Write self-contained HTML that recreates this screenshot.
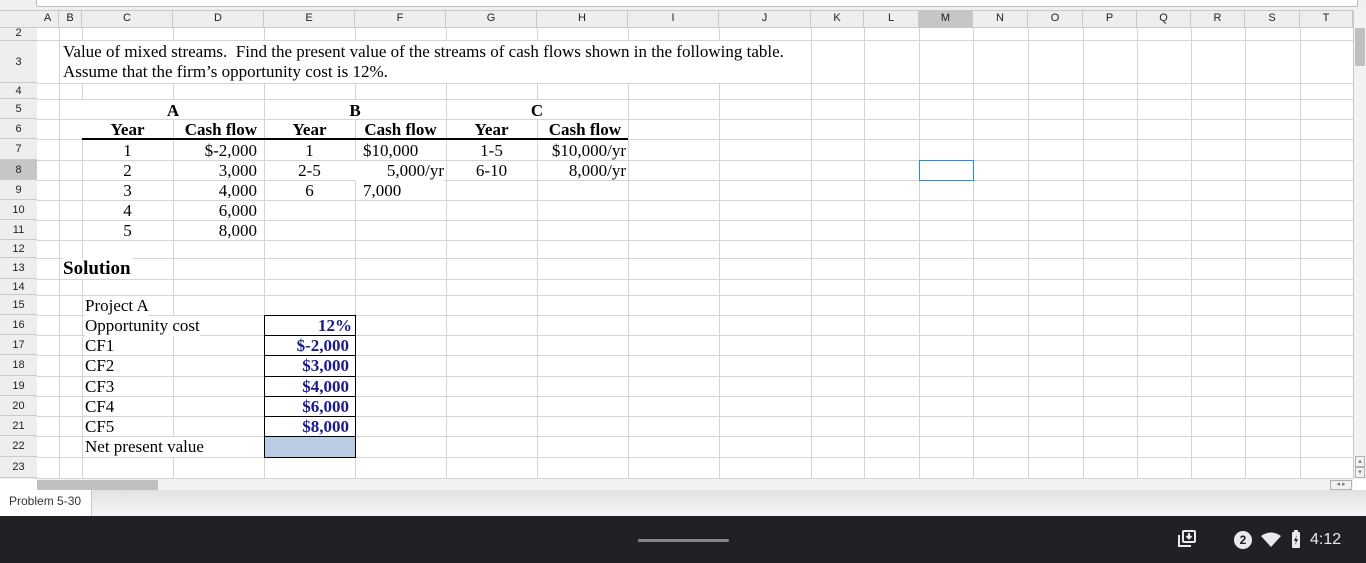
<!DOCTYPE html>
<html><head><meta charset="utf-8"><style>
*{margin:0;padding:0;box-sizing:border-box}
body{width:1366px;height:563px;overflow:hidden;background:#fff;position:relative;font-family:"Liberation Serif",serif}
.a{position:absolute}
.v{position:absolute;width:1px;background:#d4d4d4}
.h{position:absolute;height:1px;background:#d4d4d4}
.ch{position:absolute;top:10px;height:17px;font:11px "Liberation Sans",sans-serif;color:#222;text-align:center;line-height:17px;border-right:1px solid #c8c8c8}
.rh{position:absolute;left:0;width:37px;font:11px "Liberation Sans",sans-serif;color:#222;text-align:center;border-bottom:1px solid #c8c8c8;background:#eeeeee}
.t{position:absolute;font-size:17px;line-height:20px;color:#000;white-space:nowrap}
.b{font-weight:bold}
.c{text-align:center}
.r{text-align:right}
.bl{color:#1a1a8c;font-weight:bold;text-align:right;padding-right:6px}
</style></head><body>
<div class="a" style="left:0;top:0;width:1366px;height:10px;background:#f0f0f0"></div>
<div class="a" style="left:36px;top:-2px;width:1322px;height:9px;background:#fff;border:1px solid #bdbdbd;border-radius:2px"></div>
<div class="a" style="left:0;top:10px;width:1353px;height:18px;background:#eeeeee;border-bottom:1px solid #c8c8c8;border-top:1px solid #c8c8c8"></div>
<div class="ch" style="left:37px;width:22px">A</div>
<div class="ch" style="left:59px;width:23px">B</div>
<div class="ch" style="left:82px;width:91px">C</div>
<div class="ch" style="left:173px;width:91px">D</div>
<div class="ch" style="left:264px;width:91px">E</div>
<div class="ch" style="left:355px;width:91px">F</div>
<div class="ch" style="left:446px;width:91px">G</div>
<div class="ch" style="left:537px;width:91px">H</div>
<div class="ch" style="left:628px;width:91px">I</div>
<div class="ch" style="left:719px;width:92px">J</div>
<div class="ch" style="left:811px;width:53px">K</div>
<div class="ch" style="left:864px;width:55px">L</div>
<div class="ch" style="left:919px;width:54px;background:#c6c6c6">M</div>
<div class="ch" style="left:973px;width:55px">N</div>
<div class="ch" style="left:1028px;width:55px">O</div>
<div class="ch" style="left:1083px;width:54px">P</div>
<div class="ch" style="left:1137px;width:54px">Q</div>
<div class="ch" style="left:1191px;width:54px">R</div>
<div class="ch" style="left:1245px;width:55px">S</div>
<div class="ch" style="left:1300px;width:53px">T</div>
<div class="a" style="left:0;top:28px;width:37px;height:451px;background:#eeeeee;border-right:1px solid #c8c8c8"></div>
<div class="rh" style="top:28px;height:13px;line-height:10px">2</div>
<div class="rh" style="top:41px;height:42px;line-height:42px">3</div>
<div class="rh" style="top:83px;height:16px;line-height:16px">4</div>
<div class="rh" style="top:99px;height:20px;line-height:20px">5</div>
<div class="rh" style="top:119px;height:20px;line-height:20px">6</div>
<div class="rh" style="top:139px;height:21px;line-height:21px">7</div>
<div class="rh" style="top:160px;height:20px;line-height:20px;background:#c6c6c6">8</div>
<div class="rh" style="top:180px;height:20px;line-height:20px">9</div>
<div class="rh" style="top:200px;height:20px;line-height:20px">10</div>
<div class="rh" style="top:220px;height:20px;line-height:20px">11</div>
<div class="rh" style="top:240px;height:18px;line-height:18px">12</div>
<div class="rh" style="top:258px;height:21px;line-height:21px">13</div>
<div class="rh" style="top:279px;height:16px;line-height:16px">14</div>
<div class="rh" style="top:295px;height:20px;line-height:20px">15</div>
<div class="rh" style="top:315px;height:20px;line-height:20px">16</div>
<div class="rh" style="top:335px;height:20px;line-height:20px">17</div>
<div class="rh" style="top:355px;height:21px;line-height:21px">18</div>
<div class="rh" style="top:376px;height:20px;line-height:20px">19</div>
<div class="rh" style="top:396px;height:20px;line-height:20px">20</div>
<div class="rh" style="top:416px;height:20px;line-height:20px">21</div>
<div class="rh" style="top:436px;height:21px;line-height:21px">22</div>
<div class="rh" style="top:457px;height:21px;line-height:21px">23</div>
<div class="v" style="left:59px;top:28px;height:450px"></div>
<div class="v" style="left:82px;top:28px;height:13px"></div><div class="v" style="left:82px;top:83px;height:16px"></div><div class="v" style="left:82px;top:139px;height:339px"></div>
<div class="v" style="left:173px;top:28px;height:13px"></div><div class="v" style="left:173px;top:83px;height:16px"></div><div class="v" style="left:173px;top:119px;height:359px"></div>
<div class="v" style="left:264px;top:28px;height:13px"></div><div class="v" style="left:264px;top:83px;height:395px"></div>
<div class="v" style="left:355px;top:28px;height:13px"></div><div class="v" style="left:355px;top:83px;height:16px"></div><div class="v" style="left:355px;top:119px;height:359px"></div>
<div class="v" style="left:446px;top:28px;height:13px"></div><div class="v" style="left:446px;top:83px;height:395px"></div>
<div class="v" style="left:537px;top:28px;height:13px"></div><div class="v" style="left:537px;top:83px;height:16px"></div><div class="v" style="left:537px;top:119px;height:359px"></div>
<div class="v" style="left:628px;top:28px;height:13px"></div><div class="v" style="left:628px;top:83px;height:395px"></div>
<div class="v" style="left:719px;top:28px;height:13px"></div><div class="v" style="left:719px;top:83px;height:395px"></div>
<div class="v" style="left:811px;top:28px;height:450px"></div>
<div class="v" style="left:864px;top:28px;height:450px"></div>
<div class="v" style="left:919px;top:28px;height:450px"></div>
<div class="v" style="left:973px;top:28px;height:450px"></div>
<div class="v" style="left:1028px;top:28px;height:450px"></div>
<div class="v" style="left:1083px;top:28px;height:450px"></div>
<div class="v" style="left:1137px;top:28px;height:450px"></div>
<div class="v" style="left:1191px;top:28px;height:450px"></div>
<div class="v" style="left:1245px;top:28px;height:450px"></div>
<div class="v" style="left:1300px;top:28px;height:450px"></div>
<div class="h" style="left:37px;top:40px;width:1316px"></div>
<div class="h" style="left:37px;top:83px;width:1316px"></div>
<div class="h" style="left:37px;top:99px;width:1316px"></div>
<div class="h" style="left:37px;top:119px;width:1316px"></div>
<div class="h" style="left:37px;top:139px;width:1316px"></div>
<div class="h" style="left:37px;top:160px;width:1316px"></div>
<div class="h" style="left:37px;top:180px;width:1316px"></div>
<div class="h" style="left:37px;top:200px;width:1316px"></div>
<div class="h" style="left:37px;top:220px;width:1316px"></div>
<div class="h" style="left:37px;top:240px;width:1316px"></div>
<div class="h" style="left:37px;top:258px;width:1316px"></div>
<div class="h" style="left:37px;top:279px;width:1316px"></div>
<div class="h" style="left:37px;top:295px;width:1316px"></div>
<div class="h" style="left:37px;top:315px;width:1316px"></div>
<div class="h" style="left:37px;top:335px;width:1316px"></div>
<div class="h" style="left:37px;top:355px;width:1316px"></div>
<div class="h" style="left:37px;top:376px;width:1316px"></div>
<div class="h" style="left:37px;top:396px;width:1316px"></div>
<div class="h" style="left:37px;top:416px;width:1316px"></div>
<div class="h" style="left:37px;top:436px;width:1316px"></div>
<div class="h" style="left:37px;top:457px;width:1316px"></div>
<div class="h" style="left:37px;top:478px;width:1316px"></div>
<div class="a" style="left:82px;top:138px;width:546px;height:2px;background:#000"></div>
<div class="t" style="left:63px;top:42px">Value of mixed streams.&nbsp; Find the present value of the streams of cash flows shown in the following table.</div>
<div class="t" style="left:63px;top:62px">Assume that the firm’s opportunity cost is 12%.</div>
<div class="t b c" style="left:82px;top:101px;width:182px">A</div>
<div class="t b c" style="left:264px;top:101px;width:182px">B</div>
<div class="t b c" style="left:446px;top:101px;width:182px">C</div>
<div class="t b c" style="left:82px;top:120px;width:91px">Year</div>
<div class="t b r" style="left:173px;top:120px;width:84px">Cash flow</div>
<div class="t b c" style="left:264px;top:120px;width:91px">Year</div>
<div class="t b c" style="left:355px;top:120px;width:91px">Cash flow</div>
<div class="t b c" style="left:446px;top:120px;width:91px">Year</div>
<div class="t b r" style="left:537px;top:120px;width:84px">Cash flow</div>
<div class="t c" style="left:82px;top:141px;width:91px">1</div>
<div class="t c" style="left:82px;top:161px;width:91px">2</div>
<div class="t c" style="left:82px;top:181px;width:91px">3</div>
<div class="t c" style="left:82px;top:201px;width:91px">4</div>
<div class="t c" style="left:82px;top:221px;width:91px">5</div>
<div class="t r" style="left:173px;top:141px;width:84px">$-2,000</div>
<div class="t r" style="left:173px;top:161px;width:84px">3,000</div>
<div class="t r" style="left:173px;top:181px;width:84px">4,000</div>
<div class="t r" style="left:173px;top:201px;width:84px">6,000</div>
<div class="t r" style="left:173px;top:221px;width:84px">8,000</div>
<div class="t c" style="left:264px;top:141px;width:91px">1</div>
<div class="t c" style="left:264px;top:161px;width:91px">2-5</div>
<div class="t c" style="left:264px;top:181px;width:91px">6</div>
<div class="t" style="left:363px;top:141px">$10,000</div>
<div class="t r" style="left:355px;top:161px;width:89px;background:#fff">5,000/yr</div>
<div class="t" style="left:363px;top:181px">7,000</div>
<div class="t c" style="left:446px;top:141px;width:91px">1-5</div>
<div class="t c" style="left:446px;top:161px;width:91px">6-10</div>
<div class="t r" style="left:537px;top:141px;width:89px">$10,000/yr</div>
<div class="t r" style="left:537px;top:161px;width:89px">8,000/yr</div>
<div class="t b" style="left:63px;top:258px;font-size:19px;line-height:21px;background:#fff;padding-right:2px">Solution</div>
<div class="t" style="left:85px;top:296px;background:#fff">Project A</div>
<div class="t" style="left:85px;top:316px;background:#fff">Opportunity cost</div>
<div class="t" style="left:85px;top:336px">CF1</div>
<div class="t" style="left:85px;top:356px">CF2</div>
<div class="t" style="left:85px;top:377px">CF3</div>
<div class="t" style="left:85px;top:397px">CF4</div>
<div class="t" style="left:85px;top:417px">CF5</div>
<div class="t" style="left:85px;top:437px;background:#fff">Net present value</div>
<div class="a" style="left:264px;top:315px;width:92px;height:143px;border:1px solid #000"></div>
<div class="a" style="left:264px;top:335px;width:92px;height:1px;background:#000"></div>
<div class="a" style="left:264px;top:355px;width:92px;height:1px;background:#000"></div>
<div class="a" style="left:264px;top:376px;width:92px;height:1px;background:#000"></div>
<div class="a" style="left:264px;top:396px;width:92px;height:1px;background:#000"></div>
<div class="a" style="left:264px;top:416px;width:92px;height:1px;background:#000"></div>
<div class="a" style="left:264px;top:436px;width:92px;height:1px;background:#000"></div>
<div class="a" style="left:265px;top:437px;width:90px;height:20px;background:#b8cce4"></div>
<div class="t bl" style="left:264px;top:316px;width:91px;padding-right:3px">12%</div>
<div class="t bl" style="left:264px;top:336px;width:91px">$-2,000</div>
<div class="t bl" style="left:264px;top:356px;width:91px">$3,000</div>
<div class="t bl" style="left:264px;top:377px;width:91px">$4,000</div>
<div class="t bl" style="left:264px;top:397px;width:91px">$6,000</div>
<div class="t bl" style="left:264px;top:417px;width:91px">$8,000</div>
<div class="a" style="left:919px;top:160px;width:55px;height:21px;border:1px solid #1a8cff"></div>
<div class="a" style="left:1353px;top:10px;width:13px;height:469px;background:#f2f2f2;border-left:1px solid #c8c8c8"></div>
<div class="a" style="left:1355px;top:28px;width:10px;height:38px;background:#c0c0c0"></div>
<div class="a" style="left:1355px;top:456px;width:10px;height:11px;border:1px solid #b0b0b0;font:7px sans-serif;color:#777;text-align:center;line-height:9px">▴</div>
<div class="a" style="left:1355px;top:467px;width:10px;height:11px;border:1px solid #b0b0b0;font:7px sans-serif;color:#777;text-align:center;line-height:9px">▾</div>
<div class="a" style="left:37px;top:479px;width:1316px;height:11px;background:#f2f2f2"></div>
<div class="a" style="left:37px;top:480px;width:121px;height:10px;background:#c0c0c0"></div>
<div class="a" style="left:1330px;top:480px;width:22px;height:10px;border:1px solid #b0b0b0;font:7px sans-serif;color:#777;line-height:8px;text-align:center">◂ ▸</div>
<div class="a" style="left:0;top:490px;width:1366px;height:26px;background:linear-gradient(#e2e2e2,#f5f5f5)"></div>
<div class="a" style="left:0;top:490px;width:92px;height:26px;background:#fff;border-right:1px solid #c8c8c8;font:12px 'Liberation Sans',sans-serif;color:#333;line-height:22px;padding-left:9px">Problem 5-30</div>
<div class="a" style="left:0;top:516px;width:1366px;height:47px;background:#202124"></div>
<div class="a" style="left:638px;top:539px;width:91px;height:3px;background:#80868b;border-radius:2px"></div>
<svg class="a" style="left:1176px;top:528px" width="22" height="22" viewBox="0 0 22 22"><path d="M3 7v11h12" fill="none" stroke="#e8eaed" stroke-width="2"/><rect x="7" y="3" width="12" height="11" rx="1" fill="none" stroke="#e8eaed" stroke-width="2"/><path d="M13 5v5M10.5 8l2.5 2.5L15.5 8" fill="none" stroke="#e8eaed" stroke-width="2"/></svg>
<div class="a" style="left:1234px;top:531px;width:18px;height:18px;border-radius:50%;background:#e8eaed;color:#202124;font:bold 12px 'Liberation Sans',sans-serif;text-align:center;line-height:18px">2</div>
<svg class="a" style="left:1261px;top:532px" width="20" height="16" viewBox="0 0 20 16"><path d="M0 4Q10-3 20 4L10 15Z" fill="#e8eaed"/></svg>
<svg class="a" style="left:1291px;top:530px" width="10" height="18" viewBox="0 0 10 18"><rect x="3" y="0" width="4" height="2" fill="#e8eaed"/><rect x="1" y="2" width="8" height="16" rx="1" fill="#e8eaed"/><path d="M6 5L3 11h2l-1 4 3-6H5z" fill="#202124"/></svg>
<div class="a" style="left:1310px;top:530px;font:16px 'Liberation Sans',sans-serif;color:#e8eaed;line-height:20px">4:12</div>
</body></html>
